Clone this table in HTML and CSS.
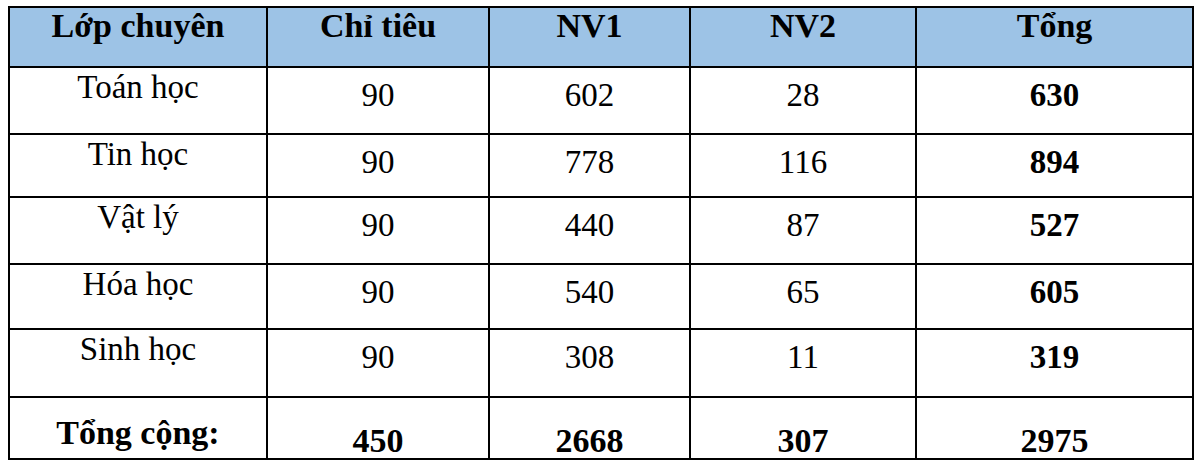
FILE: index.html
```html
<!DOCTYPE html>
<html lang="vi">
<head>
<meta charset="utf-8">
<title>Chỉ tiêu lớp chuyên</title>
<link rel="stylesheet" href="styles.css">
</head>
<body>
<table class="stats">
  <colgroup>
    <col class="c1"><col class="c2"><col class="c3"><col class="c4"><col class="c5">
  </colgroup>
  <thead>
    <tr class="head">
      <th>Lớp chuyên</th><th>Chỉ tiêu</th><th>NV1</th><th>NV2</th><th>Tổng</th>
    </tr>
  </thead>
  <tbody>
    <tr class="r1"><td class="name">Toán học</td><td>90</td><td>602</td><td>28</td><td class="sum">630</td></tr>
    <tr class="r2"><td class="name">Tin học</td><td>90</td><td>778</td><td>116</td><td class="sum">894</td></tr>
    <tr class="r3"><td class="name">Vật lý</td><td>90</td><td>440</td><td>87</td><td class="sum">527</td></tr>
    <tr class="r4"><td class="name">Hóa học</td><td>90</td><td>540</td><td>65</td><td class="sum">605</td></tr>
    <tr class="r5"><td class="name">Sinh học</td><td>90</td><td>308</td><td>11</td><td class="sum">319</td></tr>
    <tr class="total"><td class="name">Tổng cộng:</td><td>450</td><td>2668</td><td>307</td><td>2975</td></tr>
  </tbody>
</table>
</body>
</html>
```

FILE: styles.css
```css
html, body {
  margin: 0;
  padding: 0;
  background: #fff;
}

body {
  font-family: "Liberation Serif", "Times New Roman", serif;
  color: #000;
}

.stats {
  margin: 6px 0 0 8px;
  border-collapse: collapse;
  table-layout: fixed;
  width: 1186px;
}

.c1 { width: 258px; }
.c2 { width: 222px; }
.c3 { width: 201px; }
.c4 { width: 226px; }
.c5 { width: 277px; }

.stats th,
.stats td {
  border: 2px solid #000;
  padding: 0;
  text-align: center;
  vertical-align: top;
  font-size: 33px;
  line-height: 32px;
  white-space: nowrap;
}

.stats th {
  background: #9dc3e6;
  font-weight: bold;
  font-size: 34px;
  padding-top: 2px;
}

.head { height: 60px; }
.r1 { height: 67px; }
.r2 { height: 63px; }
.r3 { height: 67px; }
.r4 { height: 65px; }
.r5 { height: 68px; }
.total { height: 62px; }

.stats td {
  padding-top: 11px;
}

.stats td.name {
  padding-top: 3px;
}

.stats td.sum {
  font-weight: bold;
}

.total td {
  font-weight: bold;
  font-size: 34px;
  padding-top: 27px;
}

.total td.name {
  padding-top: 19px;
}
```
